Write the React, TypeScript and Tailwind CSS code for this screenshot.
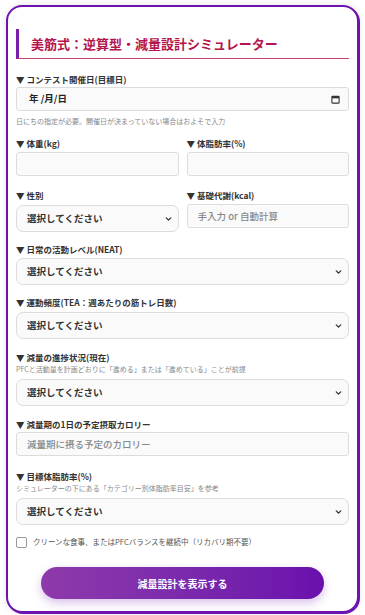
import { ChevronDown } from 'lucide-react'

const font = { fontFamily: '"Noto Sans CJK JP", "Noto Sans", sans-serif' }

function Label({ children }: { children: React.ReactNode }) {
  return (
    <div className="h-[14px] overflow-visible whitespace-nowrap text-[8.5px] font-bold leading-[14px] text-[#333]">
      ▼ {children}
    </div>
  )
}

function Hint({ children }: { children: React.ReactNode }) {
  return (
    <div className="h-[10px] overflow-visible whitespace-nowrap text-[7px] leading-[10px] text-[#888]">{children}</div>
  )
}

function TextInput({ placeholder }: { placeholder?: string }) {
  return (
    <input
      type="text"
      placeholder={placeholder}
      className="block h-[24px] w-full rounded-[3px] border border-[#dcdcdc] bg-[#fafafa] px-[10px] text-[9.5px] font-medium text-[#333] outline-none placeholder:text-[#888]"
    />
  )
}

function Select() {
  return (
    <div className="relative h-[27px]">
      <select className="block h-[27px] w-full appearance-none rounded-[7px] border border-[#dcdcdc] bg-[#fafafa] px-[10px] text-[9.5px] font-bold text-[#333] outline-none">
        <option>選択してください</option>
      </select>
      <ChevronDown
        className="pointer-events-none absolute right-[6px] top-1/2 -translate-y-1/2 text-[#333]"
        size={9}
        strokeWidth={3.5}
      />
    </div>
  )
}

export default function App() {
  return (
    <div className="min-h-screen bg-white px-[6px] pt-[5px]" style={font}>
      <div className="rounded-[16px] border-2 border-[#6d14b0] bg-white px-2 pb-[12px] pt-[22px] shadow-[1px_1px_0_#6d14b0,0_0_6px_rgba(0,0,0,0.12)]">
        <h1 className="flex h-[30px] items-center border-b border-l-[3px] border-b-[#c4436c] border-l-[#7a1fa8] pl-[12px] text-[13px] font-bold text-[#b3154c]">
          美筋式：逆算型・減量設計シミュレーター
        </h1>

        <div className="mt-[13px]">
          <Label>コンテスト開催日(目標日)</Label>
          <div className="mt-[1px] flex h-[24px] items-center justify-between rounded-[3px] border border-[#dcdcdc] bg-[#fafafa] pl-[12px] pr-[8px]">
            <span className="text-[9.5px] font-bold leading-none text-[#222]">年 /月/日</span>
            <svg width="9" height="9" viewBox="0 0 10 10" className="text-[#333]">
              <rect x="1" y="1.5" width="8" height="7.5" rx="0.8" fill="none" stroke="currentColor" strokeWidth="1.2" />
              <rect x="1" y="1.5" width="8" height="2.2" fill="currentColor" />
            </svg>
          </div>
          <div className="mt-[5px]">
            <Hint>日にちの指定が必要。開催日が決まっていない場合はおよそで入力</Hint>
          </div>
        </div>

        <div className="mt-[10px] grid grid-cols-2 gap-2">
          <div>
            <Label>体重(kg)</Label>
            <div className="mt-[2px]">
              <TextInput />
            </div>
          </div>
          <div>
            <Label>体脂肪率(%)</Label>
            <div className="mt-[2px]">
              <TextInput />
            </div>
          </div>
        </div>

        <div className="mt-[12px] grid grid-cols-2 items-start gap-2">
          <div>
            <Label>性別</Label>
            <div className="mt-[3px]">
              <Select />
            </div>
          </div>
          <div>
            <Label>基礎代謝(kcal)</Label>
            <div className="mt-[2px]">
              <TextInput placeholder="手入力 or 自動計算" />
            </div>
          </div>
        </div>

        <div className="mt-[10px]">
          <Label>日常の活動レベル(NEAT)</Label>
          <div className="mt-[2px]">
            <Select />
          </div>
        </div>

        <div className="mt-[10px]">
          <Label>運動頻度(TEA：週あたりの筋トレ日数)</Label>
          <div className="mt-[3px]">
            <Select />
          </div>
        </div>

        <div className="mt-[11px]">
          <Label>減量の進捗状況(現在)</Label>
          <Hint>PFCと活動量を計画どおりに「進める」または「進めている」ことが前提</Hint>
          <div className="mt-[5px]">
            <Select />
          </div>
        </div>

        <div className="mt-[11px]">
          <Label>減量期の1日の予定摂取カロリー</Label>
          <div className="mt-[1px]">
            <TextInput placeholder="減量期に摂る予定のカロリー" />
          </div>
        </div>

        <div className="mt-[13px]">
          <Label>目標体脂肪率(%)</Label>
          <Hint>シミュレーターの下にある「カテゴリー別体脂肪率目安」を参考</Hint>
          <div className="mt-[5px]">
            <Select />
          </div>
        </div>

        <label className="mt-[11px] flex h-[12px] items-center gap-[6px]">
          <input
            type="checkbox"
            className="block h-[11px] w-[11px] appearance-none rounded-[2px] border border-[#999] bg-white"
          />
          <span className="text-[7.5px] leading-[12px] text-[#555]">クリーンな食事、またはPFCバランスを継続中（リカバリ期不要）</span>
        </label>

        <div className="mt-[19px] flex justify-center">
          <button className="h-[32px] w-[283px] rounded-full bg-gradient-to-r from-[#8e3aab] to-[#6a0fad] text-[10px] font-bold text-white shadow-[0_4px_10px_rgba(130,50,190,0.3)]">
            減量設計を表示する
          </button>
        </div>
      </div>
    </div>
  )
}
